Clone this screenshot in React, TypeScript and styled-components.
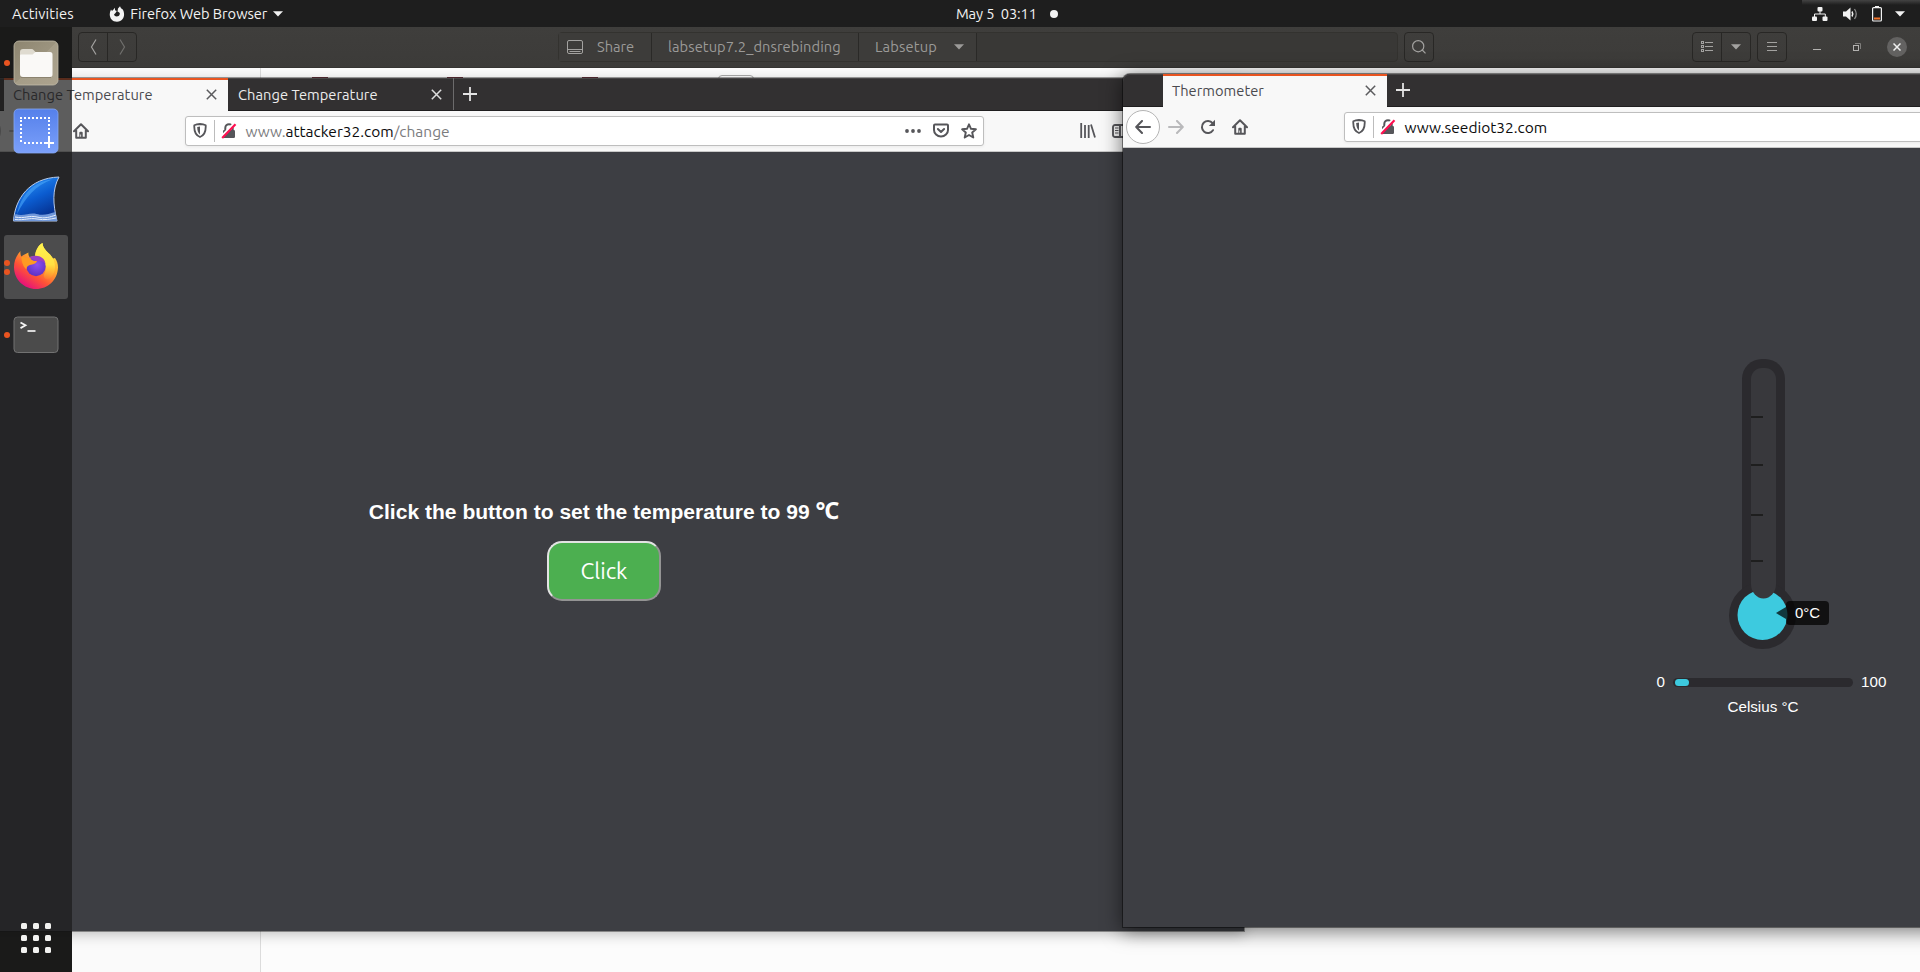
import React from 'react';
import styled, { createGlobalStyle, css } from 'styled-components';

const GlobalStyle = createGlobalStyle`
  *, *::before, *::after { box-sizing: border-box; }
  html, body { margin: 0; padding: 0; overflow: hidden; background: #1a1a16; }
  svg { display: block; flex: none; }
`;

const uiFont = 'Ubuntu, "Noto Sans", sans-serif';

const Desktop = styled.div`
  position: relative;
  width: 1920px;
  height: 972px;
  overflow: hidden;
  background: #1a1a16;
  font-family: ${uiFont};
  font-size: 14.67px;
`;

/* ---------- top bar ---------- */

const TopBar = styled.header`
  position: relative;
  display: flex;
  align-items: center;
  justify-content: space-between;
  height: 27px;
  padding: 0 15px 0 12px;
  background: #1e1e1e;
  color: #f2f2f2;
  line-height: 27px;
`;

const TopGlow = styled.div`
  position: absolute;
  top: 0;
  right: 0;
  width: 118px;
  height: 5px;
  background: linear-gradient(#434343, #1e1e1e);
`;

const TopGroup = styled.div<{ $gap: number }>`
  position: relative;
  display: flex;
  align-items: center;
  gap: ${(p) => p.$gap}px;
`;

const TopText = styled.span<{ $spacing?: number }>`
  padding-top: 1px;
  letter-spacing: ${(p) => p.$spacing ?? 0}px;
  line-height: 26px;
  white-space: pre;
`;

const AppLabel = styled.div`
  display: flex;
  align-items: center;
  gap: 5.5px;
  margin-left: 29px;
`;

const Clock = styled.div`
  position: absolute;
  left: 956px;
  top: 0;
  display: flex;
  align-items: center;
  gap: 13.5px;
`;

const Dot = styled.i`
  width: 8px;
  height: 8px;
  border-radius: 50%;
  background: #f2f2f2;
`;

const Caret = ({ color = '#f2f2f2' }: { color?: string }) => (
  <svg width="10" height="6" viewBox="0 0 10 6"><path d="M0 .3h10L5 5.6z" fill={color} /></svg>
);

/* ---------- file manager ---------- */

const FilesWindow = styled.section`
  position: absolute;
  left: 72px;
  top: 27px;
  width: 1848px;
  height: 945px;
  display: flex;
  flex-direction: column;
`;

const FilesHeader = styled.div`
  display: flex;
  align-items: center;
  height: 41px;
  padding: 0 13px 1px 6px;
  background: linear-gradient(#3f3e3c, #3c3b39);
  border-bottom: 1px solid #363533;
  color: #9b9a98;
`;

const ButtonGroup = styled.div<{ $left?: number }>`
  display: flex;
  height: 30px;
  margin-left: ${(p) => p.$left ?? 0}px;
  border: 1px solid #282725;
  border-radius: 4px;
`;

const HeaderButton = styled.div<{ $width?: number }>`
  display: flex;
  align-items: center;
  justify-content: center;
  width: ${(p) => p.$width ?? 28}px;
  & + & { border-left: 1px solid #282725; width: ${(p) => (p.$width ?? 28) + 1}px; }
`;

const PathBar = styled.div`
  display: flex;
  width: 840px;
  height: 30px;
  margin-left: 421px;
  border: 1px solid #33322f;
  border-radius: 4px;
  background: #393836;
`;

const Crumb = styled.div<{ $width: number; $gap?: number; $spacing?: number }>`
  display: flex;
  align-items: center;
  width: ${(p) => p.$width}px;
  padding-left: ${(p) => (p.$gap === 14 ? 8 : 16)}px;
  gap: ${(p) => p.$gap ?? 0}px;
  letter-spacing: ${(p) => p.$spacing ?? 0}px;
  background: #3d3c3a;
  border-right: 1px solid #2a2927;
  line-height: 28px;
`;

const WindowControls = styled.div`
  display: flex;
  align-items: center;
  gap: 31px;
  margin-left: auto;
`;

const CloseCircle = styled.span`
  display: flex;
  align-items: center;
  justify-content: center;
  width: 20px;
  height: 20px;
  margin-left: -5px;
  border-radius: 50%;
  background: #636261;
`;

const FilesBody = styled.div`
  display: flex;
  flex: 1;
  background: #fcfcfc;
`;

const FilesSidebar = styled.div`
  width: 189px;
  background: #fafafa;
  border-right: 1px solid #dcdcdc;
`;

const FilesGrid = styled.div`
  display: flex;
  align-items: flex-start;
  padding: 9px 0 0 51px;
`;

const FolderTop = styled.i<{ $left: number }>`
  width: 16px;
  height: 2px;
  margin-left: ${(p) => p.$left}px;
  background: #7d3f4c;
`;

const FilePaperTop = styled.i`
  width: 36px;
  height: 10px;
  margin: -2px 0 0 120px;
  border: 1px solid #aaa;
  border-radius: 4px;
`;

/* ---------- browser windows ---------- */

const BrowserFrame = styled.section<{ $x: number; $y: number; $front?: boolean }>`
  position: absolute;
  left: ${(p) => p.$x}px;
  top: ${(p) => p.$y}px;
  width: 1280px;
  height: 853px;
  display: flex;
  flex-direction: column;
  border-radius: 7px 7px 0 0;
  background: #3d3e43;
  ${(p) =>
    p.$front
      ? css`box-shadow: 0 0 0 1px rgba(0, 0, 0, 0.42), 0 3px 20px 1px rgba(0, 0, 0, 0.55);`
      : css`box-shadow: 0 0 0 1px rgba(0, 0, 0, 0.36), 0 3px 14px 0 rgba(0, 0, 0, 0.25);`}
`;

const TabStrip = styled.div`
  display: flex;
  height: 33px;
  padding-left: 40px;
  border-radius: 7px 7px 0 0;
  border-bottom: 1px solid #1f1e1f;
  background: #323031;
  box-shadow: inset 0 1px #484647;
`;

const Tab = styled.div<{ $active?: boolean }>`
  display: flex;
  align-items: center;
  justify-content: space-between;
  width: ${(p) => (p.$active ? 224 : 226)}px;
  height: ${(p) => (p.$active ? 33 : 32)}px;
  padding: 1px 11px 0 ${(p) => (p.$active ? 9 : 10)}px;
  color: ${(p) => (p.$active ? '#4a4a4f' : '#ececec')};
  background: ${(p) => (p.$active ? '#f8f8f8' : 'transparent')};
  ${(p) =>
    p.$active
      ? css`border-top: 2px solid #e95420; padding-top: 0; padding-bottom: 2px;`
      : css`border-right: 1px solid #6c6b6c;`}
  line-height: 20px;
  letter-spacing: 0.04px;
`;

const NewTab = styled.div`
  display: flex;
  align-items: center;
  padding-left: 9px;
`;

const Toolbar = styled.div`
  position: relative;
  display: flex;
  align-items: center;
  height: 41px;
  padding: 0 0 1px 3px;
  background: #f8f8f8;
  border-bottom: 1px solid #c8c8c8;
`;

const NavButton = styled.span<{ $round?: boolean; $width: number }>`
  display: flex;
  flex: none;
  align-items: center;
  justify-content: center;
  width: ${(p) => p.$width}px;
  height: 33px;
  ${(p) => p.$round && css`height: 34px; border: 1px solid #b4b4b4; border-radius: 50%; background: #fff;`}
`;

const UrlBar = styled.div`
  display: flex;
  flex: none;
  align-items: center;
  width: 799px;
  height: 30px;
  margin-left: 88px;
  padding: 0 6px 0 7px;
  border: 1px solid #bebebe;
  border-radius: 3px;
  background: #fff;
  box-shadow: 0 1px 3px rgba(0, 0, 0, 0.06);
`;

const UrlDivider = styled.i`
  width: 1px;
  height: 22px;
  margin: 0 6px 0 7px;
  background: #bcbcbc;
`;

const Url = styled.span<{ $plain?: boolean }>`
  flex: 1;
  padding: 1px 0 0 8.5px;
  color: ${(p) => (p.$plain ? '#0c0c0d' : '#7c7c7e')};
  font-size: 15.5px;
  line-height: 27px;
  b { font-weight: 400; color: #0c0c0d; }
`;

const UrlActions = styled.div`
  display: flex;
  align-items: center;
  gap: 12px;
`;

const ToolbarEnd = styled.div`
  display: flex;
  align-items: center;
  gap: 16px;
  margin-left: 96px;
`;

const Page = styled.main<{ $top: number }>`
  display: flex;
  flex: 1;
  flex-direction: column;
  align-items: center;
  padding-top: ${(p) => p.$top}px;
  background: #3d3e43;
  color: #fff;
  font-family: "Liberation Sans", Arial, sans-serif;
`;

const Heading = styled.h3`
  margin: 0 0 17px;
  font-size: 21.06px;
  line-height: 24px;
  span { font-family: "Open Sans", "Noto Sans", sans-serif; font-size: 23.5px; line-height: 20px; }
`;

const ClickButton = styled.button`
  width: 114px;
  height: 60px;
  padding: 0 0 2px;
  border: 2px solid;
  border-color: #e3e3e3 #949494 #949494 #e3e3e3;
  border-radius: 15px;
  background: #4caf50;
  color: #fff;
  font-family: ${uiFont};
  font-size: 22.5px;
`;

const Thermometer = styled.div`
  position: relative;
  width: 68px;
  height: 290px;
`;

const Bubble = styled.div`
  position: absolute;
  left: 57px;
  top: 242px;
  width: 43px;
  height: 24px;
  border-radius: 4px;
  background: rgba(0, 0, 0, 0.72);
  font-size: 15px;
  line-height: 24px;
  text-align: center;
  &::before {
    content: '';
    position: absolute;
    right: 100%;
    top: 6px;
    border: solid transparent;
    border-width: 6px 10px 6px 0;
    border-right-color: rgba(0, 0, 0, 0.72);
  }
`;

const RangeRow = styled.div`
  display: grid;
  grid-template-columns: 60px 180px 60px;
  align-items: center;
  column-gap: 8px;
  margin-top: 23px;
  font-size: 15.2px;
  line-height: 20px;
  span:first-child { text-align: right; }
`;

const RangeTrack = styled.div`
  height: 9px;
  padding: 1px 2px;
  border-radius: 5px;
  background: #2b2a2e;
`;

const RangeThumb = styled.i`
  display: block;
  width: 14px;
  height: 7px;
  border-radius: 4px;
  background: #3dcadf;
`;

const Unit = styled.div`
  margin-top: 5px;
  font-size: 15.2px;
  line-height: 20px;
`;

const CloseGlyph = ({ color }: { color: string }) => (
  <svg width="11" height="11" viewBox="0 0 11 11" stroke={color} strokeWidth="1.5"><path d="M.8.8l9.4 9.4M10.2.8L.8 10.2" /></svg>
);

const PlusGlyph = () => (
  <svg width="14" height="14" viewBox="0 0 14 14" stroke="#e4e4e4" strokeWidth="1.8"><path d="M7 0v14M0 7h14" /></svg>
);

const ink = '#56565a';

const BackGlyph = () => (
  <svg width="16" height="14" viewBox="0 0 16 14" fill="none" stroke={ink} strokeWidth="2" strokeLinecap="round" strokeLinejoin="round"><path d="M15 7H1.5M7 1L1.2 7 7 13" /></svg>
);
const ForwardGlyph = () => (
  <svg width="16" height="14" viewBox="0 0 16 14" fill="none" stroke="#b9b9bb" strokeWidth="2" strokeLinecap="round" strokeLinejoin="round"><path d="M1 7h13.5M9 1l5.8 6L9 13" /></svg>
);
const ReloadGlyph = () => (
  <svg width="16" height="16" viewBox="0 0 16 16" fill="none" stroke={ink} strokeWidth="2"><path d="M13 11.2A6 6 0 1 1 12.6 4.2" strokeLinecap="round" /><path d="M15 .8V7H8.8z" fill={ink} stroke="none" /></svg>
);
const HomeGlyph = () => (
  <svg width="16" height="16" viewBox="0 0 16 16" fill="none" stroke={ink} strokeWidth="2" strokeLinejoin="round" strokeLinecap="round"><path d="M1 8.2L8 1.3l7 6.9M3.2 7.5v7.3h9.6V7.5" /><path d="M6.3 14.5V9.8q0-1 1-1h1.4q1 0 1 1v4.7h-1.6v-3h-.8v3z" fill={ink} stroke="none" /></svg>
);
const ShieldGlyph = () => (
  <svg width="14" height="15" viewBox="0 0 14 15" fill="none" stroke={ink} strokeWidth="1.8" strokeLinejoin="round"><path d="M7 1C4.800 1.100 2.800 1.500 1.300 2.200 1 7.500 2 12 7 14c5-2 6-6.500 5.700-11.800C11.200 1.500 9.200 1.100 7 1z" /><path d="M7 3.600v7.800c-2-1.300-2.700-3.600-2.800-7.300z" fill={ink} stroke="none" /></svg>
);
const LockOffGlyph = () => (
  <svg width="16" height="16" viewBox="0 0 16 16" fill="none"><path d="M4.300 8V4.900a3.700 3.700 0 0 1 7.400 0V8" stroke={ink} strokeWidth="2" /><rect x="2" y="7" width="12" height="8" rx="1.200" fill={ink} /><path d="M0 14L13.500 0" stroke="#fff" strokeWidth="2.400" /><path d="M1.200 15L14.500 1.300" stroke="#ff0f50" strokeWidth="2.200" /></svg>
);
const DotsGlyph = () => (
  <svg width="16" height="4" viewBox="0 0 16 4" fill={ink}><circle cx="2" cy="2" r="1.900" /><circle cx="8" cy="2" r="1.900" /><circle cx="14" cy="2" r="1.900" /></svg>
);
const PocketGlyph = () => (
  <svg width="16" height="15" viewBox="0 0 16 15" fill="none" stroke={ink} strokeWidth="2" strokeLinecap="round" strokeLinejoin="round"><path d="M2 1.500h12q1 0 1 1v4.500a7 6.500 0 0 1-14 0V2.500q0-1 1-1z" /><path d="M4.900 6L8 9l3.100-3" /></svg>
);
const StarGlyph = () => (
  <svg width="16" height="16" viewBox="0 0 16 16" fill="none" stroke={ink} strokeWidth="1.900" strokeLinejoin="round"><path d="M8 1.300l2 4.500 4.900.5-3.700 3.200 1.100 5L8 12l-4.300 2.500 1.100-5L1.100 6.300 6 5.800z" /></svg>
);
const LibraryGlyph = () => (
  <svg width="16" height="15" viewBox="0 0 16 15" fill="none" stroke={ink} strokeWidth="1.800"><path d="M1.200 0v15M5 2v13M8.700 2v13M11 1.500L15 14.500" /></svg>
);
const SidebarGlyph = () => (
  <svg width="16" height="14" viewBox="0 0 16 14" fill="none" stroke={ink} strokeWidth="1.900"><rect x="1" y="1" width="14" height="12" rx="2" /><path d="M8 1v12" /><path d="M3 4h3.500M3 6.500h3.500M3 9h3.500" strokeWidth="1.100" /></svg>
);

type BrowserProps = {
  x: number;
  y: number;
  front?: boolean;
  tabs: string[];
  address: React.ReactNode;
  plain?: boolean;
  children: React.ReactNode;
};

const Browser = ({ x, y, front, tabs, address, plain, children }: BrowserProps) => (
  <BrowserFrame $x={x} $y={y} $front={front}>
    <TabStrip>
      {tabs.map((title, i) => (
        <Tab key={i} $active={i === 0}>
          {title}
          <CloseGlyph color={i === 0 ? '#5b5b5e' : '#dddddd'} />
        </Tab>
      ))}
      <NewTab><PlusGlyph /></NewTab>
    </TabStrip>
    <Toolbar>
      <NavButton $round $width={34}><BackGlyph /></NavButton>
      <NavButton $width={32}><ForwardGlyph /></NavButton>
      <NavButton $width={32}><ReloadGlyph /></NavButton>
      <NavButton $width={32}><HomeGlyph /></NavButton>
      <UrlBar>
        <ShieldGlyph />
        <UrlDivider />
        <LockOffGlyph />
        <Url $plain={plain}>{address}</Url>
        <UrlActions><DotsGlyph /><PocketGlyph /><StarGlyph /></UrlActions>
      </UrlBar>
      <ToolbarEnd><LibraryGlyph /><SidebarGlyph /></ToolbarEnd>
    </Toolbar>
    {children}
  </BrowserFrame>
);

/* ---------- dock ---------- */

const Dock = styled.nav`
  position: absolute;
  left: 0;
  top: 27px;
  width: 72px;
  height: 945px;
  display: flex;
  flex-direction: column;
  gap: 4px;
  padding: 4px;
  background: rgba(27, 27, 27, 0.7);
`;

const DockItem = styled.div<{ $active?: boolean }>`
  position: relative;
  display: flex;
  align-items: center;
  justify-content: center;
  height: 64px;
  border-radius: 3px;
  background: ${(p) => (p.$active ? '#4c4c4d' : 'transparent')};
`;

const Running = styled.span`
  position: absolute;
  left: 0;
  top: 0;
  height: 64px;
  display: flex;
  flex-direction: column;
  justify-content: center;
  gap: 3px;
  i { width: 6px; height: 6px; border-radius: 50%; background: #e95420; }
`;

const AppGrid = styled.div`
  display: grid;
  grid-template-columns: repeat(3, 6px);
  gap: 6px;
  margin: auto auto 15px;
  i { width: 6px; height: 6px; border-radius: 1.5px; background: #f2f2f0; }
`;

const FilesIcon = () => (
  <svg width="46" height="46" viewBox="0 0 46 46">
    <defs><linearGradient id="fi" x1="0" y1="0" x2="1" y2="1"><stop offset="0" stopColor="#8d8570" /><stop offset=".5" stopColor="#9c947f" /><stop offset=".5" stopColor="#a59d88" /><stop offset="1" stopColor="#aca38e" /></linearGradient></defs>
    <rect x="1" y="1" width="44" height="44" rx="5" fill="url(#fi)" stroke="#c2bba8" strokeWidth=".8" />
    <path d="M7 12q0-3 3-3h8.500q1.500 0 2.300 1.200L22.500 12H36v8H7z" fill="#dfdbd0" />
    <path d="M7 15.500q0-1 1-1h11.500l3-2.500H37q2.500 0 2.500 2.500v20Q39.500 37 37 37H10q-3 0-3-3z" fill="#faf9f7" />
    <path d="M8 37.500h30" stroke="#8b836f" strokeWidth="1" />
  </svg>
);
const ScreenshotIcon = () => (
  <svg width="46" height="46" viewBox="0 0 46 46">
    <defs><linearGradient id="si" x1="0" y1="0" x2="0" y2="1"><stop offset="0" stopColor="#5580ea" /><stop offset="1" stopColor="#7ba0fb" /></linearGradient></defs>
    <rect x="1" y="1" width="44" height="44" rx="4.500" fill="url(#si)" stroke="#86a8f5" strokeWidth=".8" />
    <path d="M7 10h30M8 12v24M36 12v18M11 35h18" stroke="#fff" strokeWidth="2" strokeDasharray="2 2" fill="none" />
    <path d="M36 30v10M31 35h10" stroke="#fff" strokeWidth="2" />
  </svg>
);
const SharkIcon = () => (
  <svg width="48" height="46" viewBox="0 0 48 46">
    <defs><linearGradient id="sh" x1=".3" y1="0" x2=".8" y2="1"><stop offset="0" stopColor="#2b93f5" /><stop offset=".45" stopColor="#0b5cd0" /><stop offset="1" stopColor="#04257e" /></linearGradient></defs>
    <path d="M1.500 45C3 23 17 2 47 1c-7 13-6 27-2 44z" fill="url(#sh)" stroke="#b9cbe8" strokeWidth="1" />
    <path d="M5 38C9 20 20 6 40 3.500 24 9 13 22 5 38z" fill="#4aa6fa" opacity=".6" />
    <path d="M1.500 45l2-7c8 3 14-2 21 0 8 2 11 0 19-2l1.500 9z" fill="#7198da" />
    <path d="M3 41c10 2 14-2 22 0s13 0 19-2M3 43.500c10 1 14-2 22-.5s13 0 19-1" stroke="#e4edfb" strokeWidth="1" fill="none" />
  </svg>
);
const FirefoxIcon = () => (
  <svg width="46" height="48" viewBox="0 0 46 48">
    <defs>
      <linearGradient id="ff" x1=".85" y1=".15" x2=".3" y2=".98"><stop offset="0" stopColor="#ffe848" /><stop offset=".35" stopColor="#ffad2e" /><stop offset=".68" stopColor="#ff5336" /><stop offset="1" stopColor="#e5107c" /></linearGradient>
      <linearGradient id="fy" x1="0" y1="0" x2="0" y2="1"><stop offset="0" stopColor="#fff44f" /><stop offset=".6" stopColor="#ffe043" /><stop offset="1" stopColor="#ffa52b" stopOpacity=".2" /></linearGradient>
      <radialGradient id="fp" cx=".55" cy=".4" r=".65"><stop offset="0" stopColor="#8b50f2" /><stop offset="1" stopColor="#5a2fbf" /></radialGradient>
    </defs>
    <path d="M7.500 8c-.3 2 0 4 .8 5.500L10.500 12 15.500 9.500c-.3 1.500 0 3 1 4.500L22 13c.5-5.500 3-10.500 7.500-13 .3 5 4 8 7.500 11.500l3 4 2-.5c2 3 3 6 3 9.500C44.500 37 35 46 23 46S1 36.500 1 24C1 17 4 12 7.500 8z" fill="url(#ff)" />
    <path d="M29.500 0c.3 5 4 8 7.500 11.500 6 6 7 16 1 23-3 3-8 2-7-3 4-7 1-13-9-18.500.5-5.500 3-10.500 7.500-13z" fill="url(#fy)" />
    <circle cx="23" cy="23.500" r="9.700" fill="url(#fp)" />
    <path d="M16 14.500c7-4 16-1 16.500 6.500-3-4-7-3-9-2-2-2-4-3-7.500-4.500z" fill="#9a3fc4" />
    <path d="M8.500 14c5-.5 8 1.500 11 3.200 1.500 1 3.500.8 4.500.8-.5 2.500-3 3.200-6 3.800-3.500.7-4.500 2.500-4.500 4.700-3.500-3-5-8-5-12.500z" fill="#ff9b22" />
  </svg>
);
const TerminalIcon = () => (
  <svg width="46" height="38" viewBox="0 0 46 38">
    <rect x="1" y="1" width="44" height="35.500" rx="3.500" fill="#4b4b4b" stroke="#727272" strokeWidth="1" />
    <path d="M7.500 6.500l5 2.800-5 2.800" fill="none" stroke="#f4f4f4" strokeWidth="1.800" />
    <path d="M14.500 15h8" stroke="#f4f4f4" strokeWidth="1.700" />
  </svg>
);

export default function App() {
  return (
    <Desktop>
      <GlobalStyle />
      <TopBar>
        <TopGlow />
        <TopGroup $gap={6}>
          <TopText $spacing={0.17}>Activities</TopText>
          <AppLabel>
            <svg width="16" height="16" viewBox="0 0 16 16">
              <path d="M2 3.500L3 5l1.500-1.500L6 1.800v2.500L7.800 5 6.500 7 5 8.500C5.500 11 10 11.500 10.800 8c.2-1.200-.8-2-2.300-2.500L9 2.500 11 .2l1 2 1.500 1c3 4 2 12.500-5.500 12.600C1.500 15.800-1 9 2 3.500z" fill="#f2f2f2" />
            </svg>
            <TopText $spacing={-0.04}>Firefox Web Browser</TopText>
            <Caret />
          </AppLabel>
        </TopGroup>
        <Clock>
          <TopText $spacing={-0.12}>{'May 5\u00a0 03:11'}</TopText>
          <Dot />
        </Clock>
        <TopGroup $gap={13}>
          <svg width="18" height="14" viewBox="0 0 18 14" fill="#f2f2f2"><rect x="5.500" width="5" height="4.500" rx="1" /><rect y="9.500" width="5" height="4.500" rx="1" /><rect x="10.500" y="9.500" width="5" height="4.500" rx="1" /><path d="M8 4v3M2.500 10V7h10.800v3" stroke="#f2f2f2" fill="none" /></svg>
          <svg width="16" height="14" viewBox="0 0 16 14" fill="none"><path d="M0 4.500h3L7.500.5v13L3 9.500H0z" fill="#f2f2f2" /><path d="M9 4.500q1.500 2.500 0 5" stroke="#f2f2f2" strokeWidth="1.500" /><path d="M11.500 2q3.500 5 0 10" stroke="#8a8a8a" strokeWidth="1.300" /></svg>
          <svg width="10" height="16" viewBox="0 0 10 16"><rect x="3" y="0" width="4" height="2" fill="#f2f2f2" /><rect x=".6" y="1.600" width="8.800" height="13.400" rx="1" fill="none" stroke="#f2f2f2" strokeWidth="1.200" /><rect x="2" y="11.500" width="6" height="2" fill="#f37329" /></svg>
          <Caret />
        </TopGroup>
      </TopBar>

      <FilesWindow>
        <FilesHeader>
          <ButtonGroup>
            <HeaderButton><svg width="7" height="16" viewBox="0 0 7 16" fill="none" stroke="#a3a2a0" strokeWidth="1.200"><path d="M6 .5L1.500 8 6 15.500" /></svg></HeaderButton>
            <HeaderButton><svg width="7" height="16" viewBox="0 0 7 16" fill="none" stroke="#706f6d" strokeWidth="1.200"><path d="M1 .5L5.500 8 1 15.500" /></svg></HeaderButton>
          </ButtonGroup>
          <PathBar>
            <Crumb $width={93} $gap={14}>
              <svg width="16" height="14" viewBox="0 0 16 14" fill="none" stroke="#a3a2a0"><rect x=".5" y=".5" width="15" height="13" rx="1.500" /><path d="M.5 9.500h15M2.500 11.500h11" /></svg>
              Share
            </Crumb>
            <Crumb $width={207} $spacing={0.08}>labsetup7.2_dnsrebinding</Crumb>
            <Crumb $width={118} $gap={17} $spacing={0.15}>Labsetup <Caret color="#9b9a98" /></Crumb>
          </PathBar>
          <ButtonGroup $left={6}>
            <HeaderButton><svg width="14" height="14" viewBox="0 0 14 14" fill="none" stroke="#a3a2a0" strokeWidth="1.200"><circle cx="6.200" cy="6.200" r="5.600" /><path d="M9.800 9.500l3.700 3.800" /></svg></HeaderButton>
          </ButtonGroup>
          <ButtonGroup $left={258}>
            <HeaderButton><svg width="12" height="12" viewBox="0 0 12 12" fill="none" stroke="#a3a2a0"><path d="M4 1.500h8M4 5.500h8M4 9.500h8" /><rect x=".5" y=".5" width="2" height="2" /><rect x=".5" y="4.500" width="2" height="2" /><rect x=".5" y="8.500" width="2" height="2" /></svg></HeaderButton>
            <HeaderButton><Caret color="#a3a2a0" /></HeaderButton>
          </ButtonGroup>
          <ButtonGroup $left={6}>
            <HeaderButton><svg width="10" height="10" viewBox="0 0 10 10" stroke="#a3a2a0"><path d="M0 .5h10M0 4.500h10M0 8.500h10" /></svg></HeaderButton>
          </ButtonGroup>
          <WindowControls>
            <svg width="9" height="8" viewBox="0 0 9 8" stroke="#b3b2b0"><path d="M0 6.500h8" /></svg>
            <svg width="8" height="8" viewBox="0 0 8 8" fill="none" stroke="#b3b2b0"><rect x=".5" y="2.500" width="5" height="5" /><path d="M2 .5h5.500V6" stroke="#7f7e7c" /></svg>
            <CloseCircle><svg width="8" height="8" viewBox="0 0 8 8" stroke="#f0f0f0" strokeWidth="1.500"><path d="M.5.5l7 7M7.500.5l-7 7" /></svg></CloseCircle>
          </WindowControls>
        </FilesHeader>
        <FilesBody>
          <FilesSidebar />
          <FilesGrid>
            <FolderTop $left={0} />
            <FolderTop $left={119} />
            <FolderTop $left={119} />
            <FilePaperTop />
          </FilesGrid>
        </FilesBody>
      </FilesWindow>

      <Browser x={-36} y={78} tabs={['Change Temperature', 'Change Temperature']} address={<>www.<b>attacker32.com</b>/change</>}>
        <Page $top={348}>
          <Heading>Click the button to set the temperature to 99 <span>℃</span></Heading>
          <ClickButton>Click</ClickButton>
        </Page>
      </Browser>

      <Browser x={1123} y={74} front plain tabs={['Thermometer']} address="www.seediot32.com">
        <Page $top={211}>
          <Thermometer>
            <svg width="67" height="290" viewBox="0 0 67 290">
              <rect x="13" y="0" width="43" height="260" rx="20" fill="#2b2a2e" />
              <circle cx="33.500" cy="256.500" r="33.500" fill="#2b2a2e" />
              <circle cx="33.500" cy="256" r="25" fill="#3dcadf" />
              <path d="M22 20a11 11 0 0 1 11-11h3a11 11 0 0 1 11 11v205a12.500 14.500 0 0 1-25 0z" fill="#38383c" />
              <path d="M22 58h12M22 106h12M22 156h12M22 202h12" stroke="#1e1e1e" strokeWidth="2" />
            </svg>
            <Bubble>0°C</Bubble>
          </Thermometer>
          <RangeRow>
            <span>0</span>
            <RangeTrack><RangeThumb /></RangeTrack>
            <span>100</span>
          </RangeRow>
          <Unit>Celsius °C</Unit>
        </Page>
      </Browser>

      <Dock>
        <DockItem><Running><i /></Running><FilesIcon /></DockItem>
        <DockItem><ScreenshotIcon /></DockItem>
        <DockItem><SharkIcon /></DockItem>
        <DockItem $active><Running><i /><i /></Running><FirefoxIcon /></DockItem>
        <DockItem><Running><i /></Running><TerminalIcon /></DockItem>
        <AppGrid>{Array.from({ length: 9 }, (_, i) => <i key={i} />)}</AppGrid>
      </Dock>
    </Desktop>
  );
}
